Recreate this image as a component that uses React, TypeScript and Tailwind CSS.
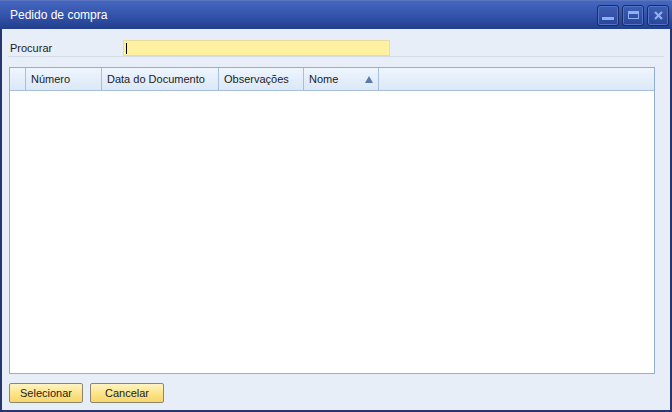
import React from 'react'

const columns = [
  { label: '', width: 'w-[16px]' },
  { label: 'Número', width: 'w-[76px]' },
  { label: 'Data do Documento', width: 'w-[117px]' },
  { label: 'Observações', width: 'w-[85px]' },
  { label: 'Nome', width: 'w-[75px]', sorted: true },
]

function WinButton({ children }: { children: React.ReactNode }) {
  return (
    <div className="flex h-[21px] w-[22px] items-center justify-center rounded-[3px] border border-[#1a2c66] bg-gradient-to-b from-[#3d5db4] to-[#2a469a] shadow-[inset_0_0_0_1px_#5473c4]">
      {children}
    </div>
  )
}

export default function App() {
  return (
    <div
      className="flex h-[412px] w-[672px] flex-col border-x-2 border-b-2 border-[#27366e] bg-[#e7eef7] text-[11px] text-[#1c1c1c]"
      style={{ fontFamily: '"Liberation Sans", Arial, sans-serif' }}
    >
      {/* Title bar */}
      <div className="-mx-[2px] flex h-[29px] items-center justify-between border-t border-[#5a74c0] bg-gradient-to-b from-[#4667bf] via-[#3454ac] to-[#223f8c] pl-[10px] pr-[3px]">
        <span className="text-[12px] text-white">Pedido de compra</span>
        <div className="flex gap-[3px]">
          <WinButton>
            <div className="mt-[6px] h-[3px] w-[12px] bg-[#8fb0f0]" />
          </WinButton>
          <WinButton>
            <div className="h-[8px] w-[11px] border-x border-b border-t-[3px] border-[#8fb0f0]" />
          </WinButton>
          <WinButton>
            <svg width="11" height="11" viewBox="0 0 11 11">
              <path d="M2 2 L9 9 M9 2 L2 9" stroke="#8fb0f0" strokeWidth="2.2" />
            </svg>
          </WinButton>
        </div>
      </div>

      {/* Search row */}
      <div className="mx-[6px] mt-[11px] flex h-[17px] items-center border-b border-[#d3dbe6]">
        <span className="w-[115px] pl-[2px]">Procurar</span>
        <div className="flex h-[16px] w-[267px] items-center border border-[#e6dea0] bg-[#fff1a0] pl-[2px]">
          <div className="h-[11px] w-[1px] bg-black" />
        </div>
      </div>

      {/* Grid */}
      <div className="ml-[7px] mr-[15px] mt-[10px] flex flex-1 flex-col border border-[#94aecf] bg-white">
        <div className="flex h-[23px] border-b border-[#a8bfdc] bg-gradient-to-b from-[#eef5fd] to-[#dbe8f8]">
          {columns.map((c, i) => (
            <div
              key={i}
              className={`${c.width} flex items-center justify-between whitespace-nowrap border-r border-[#a8bfdc] px-[5px]`}
            >
              <span>{c.label}</span>
              {c.sorted && (
                <svg width="8" height="7" viewBox="0 0 8 7">
                  <path d="M4 0 L8 7 L0 7 Z" fill="#5b7aa8" />
                </svg>
              )}
            </div>
          ))}
          <div className="flex-1" />
        </div>
        <div className="flex-1" />
      </div>

      {/* Buttons */}
      <div className="ml-[7px] mt-[9px] mb-[7px] flex gap-[7px]">
        {['Selecionar', 'Cancelar'].map((b) => (
          <button
            key={b}
            className="flex h-[20px] w-[74px] items-center justify-center rounded-[2px] border border-[#8c8770] bg-gradient-to-b from-[#fff4c4] via-[#fde58a] to-[#f7d56a] text-[11px] text-[#1c1c1c]"
          >
            {b}
          </button>
        ))}
      </div>
    </div>
  )
}
